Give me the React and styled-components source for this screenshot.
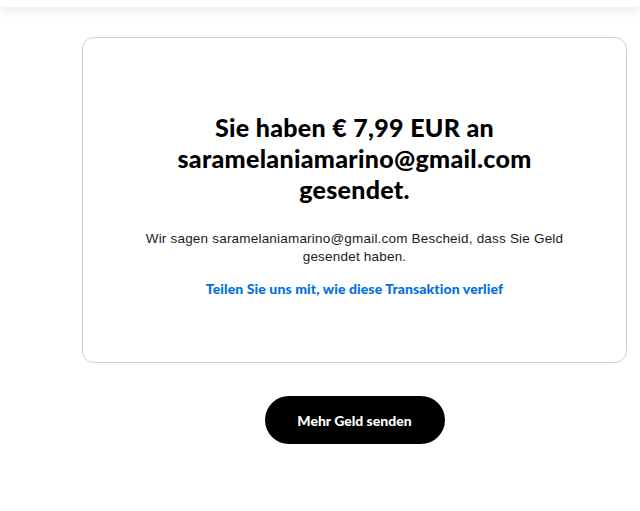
import React from 'react';
import styled, { createGlobalStyle } from 'styled-components';

const GlobalStyle = createGlobalStyle`
    html, body {
        margin: 0;
        padding: 0;
        background: #ffffff;
    }
    body {
        font-family: "Liberation Sans", Arial, sans-serif;
        color: #000;
    }
`;

const Header = styled.header`
    height: 7px;
    background: #ffffff;
    box-shadow: 0 2px 12px rgba(0, 0, 0, 0.12);
`;

const Main = styled.main`
    padding: 30px 13px 0 82px;
    display: flex;
    flex-direction: column;
    align-items: center;
`;

const Card = styled.section`
    box-sizing: border-box;
    width: 545px;
    height: 326px;
    border: 1px solid #cfcfcf;
    border-radius: 12px;
    display: flex;
    flex-direction: column;
    align-items: center;
    padding: 74px 30px 0;
    text-align: center;
`;

const Title = styled.h1`
    margin: 0;
    font-family: "Lato", sans-serif;
    font-weight: 900;
    font-size: 25px;
    line-height: 31px;
    letter-spacing: 0.3px;
    color: #000;
    max-width: 400px;
`;

const Message = styled.p`
    margin: 25px 0 0;
    font-size: 13.5px;
    line-height: 18px;
    letter-spacing: 0.2px;
    color: #1a1a1a;
    max-width: 450px;
`;

const FeedbackLink = styled.a`
    margin-top: 14px;
    font-family: "Lato", sans-serif;
    font-weight: 900;
    font-size: 14px;
    letter-spacing: 0.1px;
    color: #0070e0;
    text-decoration: none;
    cursor: pointer;
`;

const SendButton = styled.button`
    margin-top: 33px;
    width: 180px;
    height: 48px;
    border: none;
    border-radius: 24px;
    background: #000;
    color: #fff;
    font-family: "Lato", sans-serif;
    font-weight: 900;
    font-size: 14px;
    cursor: pointer;
`;

const App = () => {
    return (
        <React.Fragment>
            <GlobalStyle />
            <Header />
            <Main>
                <Card>
                    <Title>Sie haben € 7,99 EUR an saramelaniamarino@gmail.com gesendet.</Title>
                    <Message>
                        Wir sagen saramelaniamarino@gmail.com Bescheid, dass Sie Geld gesendet haben.
                    </Message>
                    <FeedbackLink>Teilen Sie uns mit, wie diese Transaktion verlief</FeedbackLink>
                </Card>
                <SendButton>Mehr Geld senden</SendButton>
            </Main>
        </React.Fragment>
    );
};

export default App;
